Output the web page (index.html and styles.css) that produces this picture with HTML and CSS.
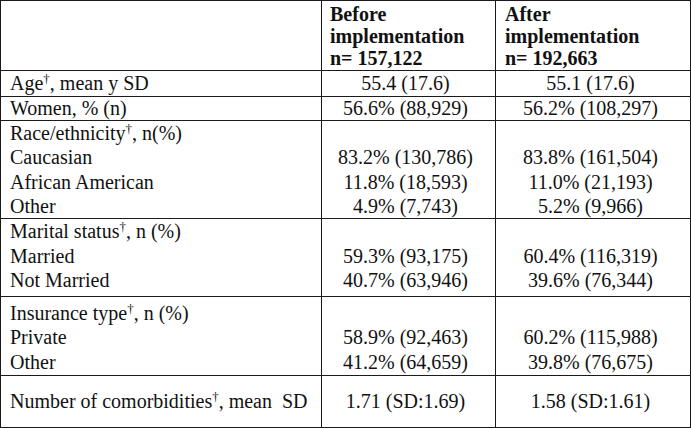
FILE: index.html
```html
<!DOCTYPE html>
<html>
<head>
<meta charset="utf-8">
<link rel="stylesheet" href="styles.css">
</head>
<body>
<table class="t">
  <colgroup>
    <col class="c1">
    <col class="c2">
    <col class="c3">
  </colgroup>
  <tr class="r-head">
    <td></td>
    <td class="h h-before"><div>Before</div><div>implementation</div><div>n= 157,122</div></td>
    <td class="h h-after"><div>After</div><div>implementation</div><div>n= 192,663</div></td>
  </tr>
  <tr class="r-age">
    <td class="lab">Age<sup>†</sup>, mean y SD</td>
    <td class="v v1">55.4 (17.6)</td>
    <td class="v v2">55.1 (17.6)</td>
  </tr>
  <tr class="r-women">
    <td class="lab">Women, % (n)</td>
    <td class="v v1">56.6% (88,929)</td>
    <td class="v v2">56.2% (108,297)</td>
  </tr>
  <tr class="r-race">
    <td class="lab"><div>Race/ethnicity<sup>†</sup>, n(%)</div><div>Caucasian</div><div>African American</div><div>Other</div></td>
    <td class="v v1"><div>&nbsp;</div><div>83.2% (130,786)</div><div>11.8% (18,593)</div><div>4.9% (7,743)</div></td>
    <td class="v v2"><div>&nbsp;</div><div>83.8% (161,504)</div><div>11.0% (21,193)</div><div>5.2% (9,966)</div></td>
  </tr>
  <tr class="r-marital">
    <td class="lab"><div>Marital status<sup>†</sup>, n (%)</div><div>Married</div><div>Not Married</div></td>
    <td class="v v1"><div>&nbsp;</div><div>59.3% (93,175)</div><div>40.7% (63,946)</div></td>
    <td class="v v2"><div>&nbsp;</div><div>60.4% (116,319)</div><div>39.6% (76,344)</div></td>
  </tr>
  <tr class="r-ins">
    <td class="lab"><div>Insurance type<sup>†</sup>, n (%)</div><div>Private</div><div>Other</div></td>
    <td class="v v1"><div>&nbsp;</div><div>58.9% (92,463)</div><div>41.2% (64,659)</div></td>
    <td class="v v2"><div>&nbsp;</div><div>60.2% (115,988)</div><div>39.8% (76,675)</div></td>
  </tr>
  <tr class="r-com">
    <td class="lab">Number of comorbidities<sup>†</sup>, mean&nbsp; SD</td>
    <td class="v v1">1.71 (SD:1.69)</td>
    <td class="v v2">1.58 (SD:1.61)</td>
  </tr>
</table>
</body>
</html>
```

FILE: styles.css
```css
html, body {
  margin: 0;
  padding: 0;
  background: #ffffff;
}

.t {
  border-collapse: collapse;
  table-layout: fixed;
  width: 690px;
  font-family: "Liberation Serif", "Times New Roman", serif;
  font-size: 20px;
  line-height: 24px;
  color: #111;
}

.c1 { width: 321px; }
.c2 { width: 174px; }
.c3 { width: 195px; }

.t td {
  border: 1px solid #1a1a1a;
  padding: 0;
  vertical-align: top;
}

.t sup {
  font-size: 13px;
  line-height: 0;
  vertical-align: 7px;
}

.t td.lab { padding-left: 9px; }

.v { text-align: center; }
.t td.v1 { padding-right: 6px; }
.t td.v2 { padding-right: 5px; }

.t td.h {
  font-weight: bold;
  line-height: 22px;
  padding-top: 2px;
  padding-bottom: 1px;
}
.t td.h-before { padding-left: 8px; }
.t td.h-after { padding-left: 9px; }

.r-age td { line-height: 25px; }
.r-women td { line-height: 23px; }
.r-race td { line-height: 24.25px; }
.r-marital td { line-height: 24.5px; padding-bottom: 3.5px; }
.r-ins td { line-height: 24.25px; padding-top: 4px; padding-bottom: 1.25px; }
.r-com td {
  vertical-align: middle;
  line-height: 24px;
  padding-top: 13px;
  padding-bottom: 14px;
}
```
